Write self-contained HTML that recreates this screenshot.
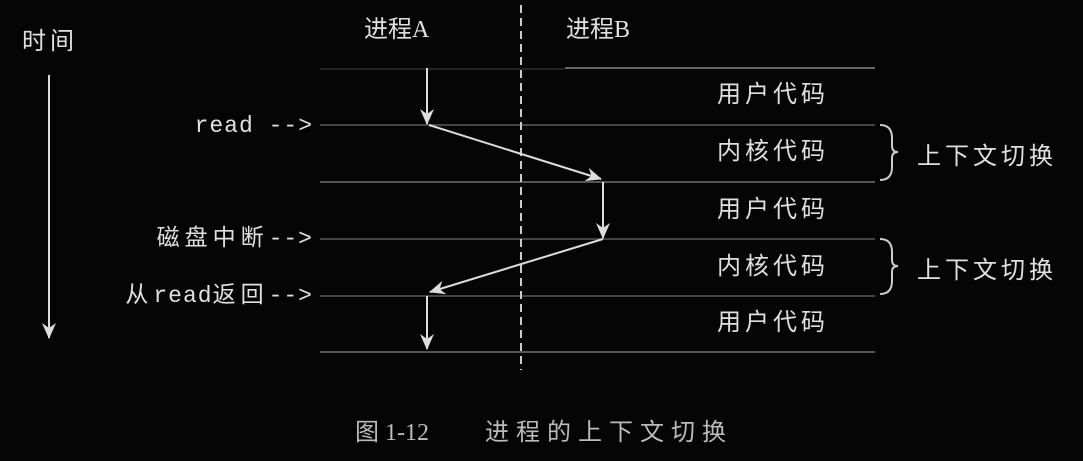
<!DOCTYPE html>
<html><head><meta charset="utf-8"><style>
html,body{margin:0;padding:0;background:#050505;}
body{width:1083px;height:461px;position:relative;overflow:hidden;font-family:"Liberation Serif","Noto Sans CJK SC",serif;color:#e0e0e0;}
.t{position:absolute;font-size:24px;line-height:28px;white-space:nowrap;}
.c{letter-spacing:4px;}
.m{font-family:"Liberation Mono","Noto Sans CJK SC",monospace;font-size:23px;letter-spacing:1px;}
.m span{letter-spacing:5px;}
</style></head><body>
<svg width="1083" height="461" style="position:absolute;left:0;top:0">
<defs><marker id="ah" markerWidth="16" markerHeight="16" refX="15" refY="8" orient="auto" markerUnits="userSpaceOnUse"><path d="M0,1 L16,8 L0,15 L5,8 Z" fill="#ddd"/></marker></defs>
<g stroke-width="2">
<line x1="320" y1="69" x2="565" y2="69" stroke="#222"/>
<line x1="565" y1="68" x2="875" y2="68" stroke="#666"/>
<line x1="320" y1="125" x2="875" y2="125" stroke="#444"/>
<line x1="320" y1="182" x2="875" y2="182" stroke="#555"/>
<line x1="320" y1="239" x2="875" y2="239" stroke="#444"/>
<line x1="320" y1="296" x2="875" y2="296" stroke="#444"/>
<line x1="320" y1="352" x2="875" y2="352" stroke="#555"/>
</g>
<line x1="521" y1="5" x2="521" y2="370" stroke="#ccc" stroke-width="2" stroke-dasharray="8,5"/>
<g stroke="#ddd" stroke-width="2" fill="none" marker-end="url(#ah)">
<line x1="49" y1="75" x2="49" y2="338"/>
<line x1="427" y1="68" x2="427" y2="124"/>
<line x1="429" y1="125" x2="601" y2="179"/>
<line x1="603" y1="182" x2="603" y2="238"/>
<line x1="603" y1="239" x2="430" y2="292"/>
<line x1="427" y1="296" x2="427" y2="349"/>
</g>
<g stroke="#ccc" stroke-width="2" fill="none">
<path d="M880,125 Q892,125 892,138 L892,146 Q892,152 898,152 Q892,152 892,158 L892,167 Q892,180 880,180"/>
<path d="M880,239 Q892,239 892,252 L892,260 Q892,266 898,266 Q892,266 892,272 L892,281 Q892,294 880,294"/>
</g>
</svg>
<div class="t c" style="left:22px;top:28px">时间</div>
<div class="t" style="left:364px;top:16px">进程A</div>
<div class="t" style="left:566px;top:16px">进程B</div>
<div class="t m" style="right:770px;top:112px">read --&gt;</div>
<div class="t m" style="right:770px;top:225px"><span>磁盘中断</span>--&gt;</div>
<div class="t m" style="right:770px;top:282px"><span>从</span>read<span>返回</span>--&gt;</div>
<div class="t c" style="left:717px;top:81px">用户代码</div>
<div class="t c" style="left:717px;top:138px">内核代码</div>
<div class="t c" style="left:717px;top:196px">用户代码</div>
<div class="t c" style="left:717px;top:253px">内核代码</div>
<div class="t c" style="left:717px;top:309px">用户代码</div>
<div class="t c" style="left:917px;top:143px">上下文切换</div>
<div class="t c" style="left:917px;top:257px">上下文切换</div>
<div class="t" style="left:355px;top:419px;font-size:24px;color:#bbb">图 1-12<span style="position:absolute;left:130px;letter-spacing:7px">进程的上下文切换</span></div>
</body></html>
